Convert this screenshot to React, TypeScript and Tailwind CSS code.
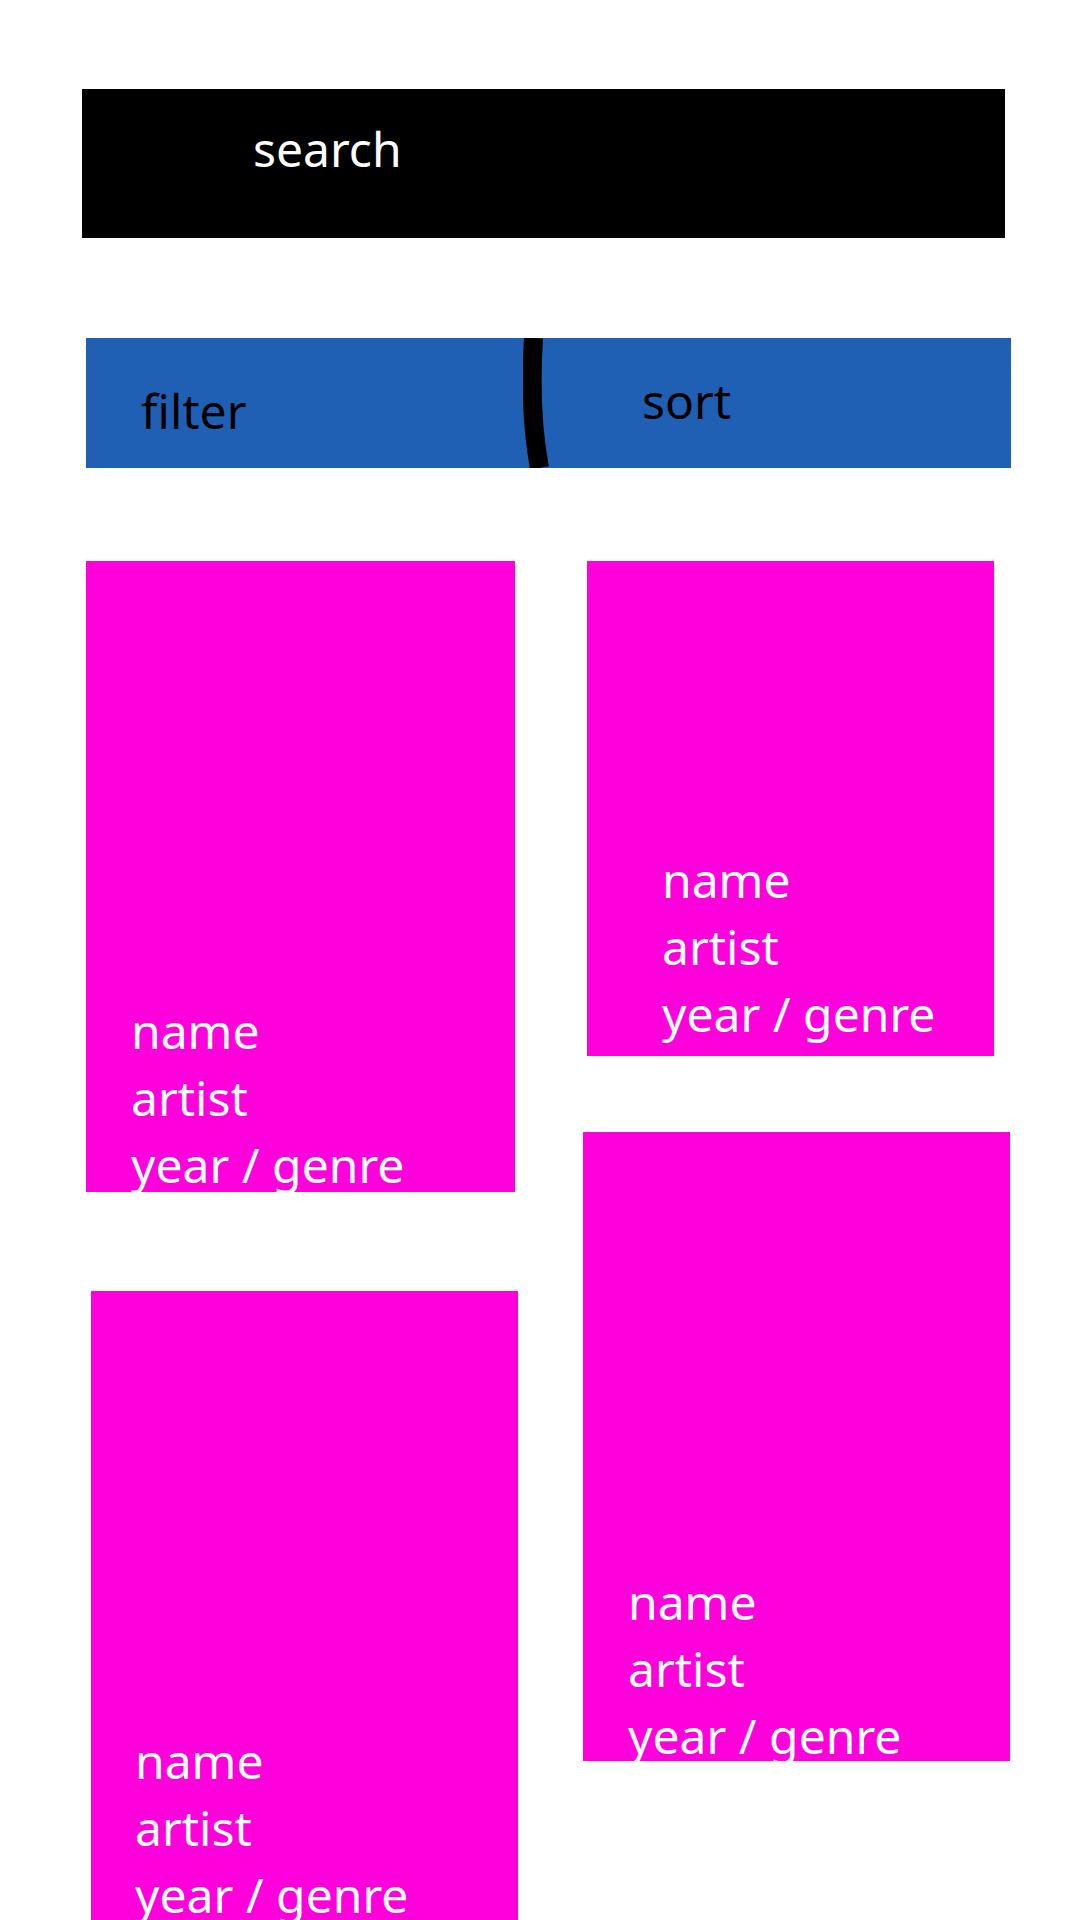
import React from 'react';

type Card = {
  box: string;
  pad: string;
};

function AlbumCard({ box, pad }: Card) {
  return (
    <div className={`bg-[#ff00dc] flex flex-col text-white text-[48px] leading-[67px] ${box} ${pad}`}>
      <span>name</span>
      <span>artist</span>
      <span className="whitespace-nowrap">year / genre</span>
    </div>
  );
}

export default function App() {
  return (
    <div
      className="w-[1080px] h-[1920px] overflow-hidden bg-white flex flex-col"
      style={{ fontFamily: '"Noto Sans", "Open Sans", sans-serif' }}
    >
      {/* search */}
      <div className="mt-[89px] ml-[82px] w-[923px] h-[149px] shrink-0 bg-black pt-[26px] pl-[171px]">
        <span className="text-white text-[48px] leading-[67px]">search</span>
      </div>

      {/* filter / sort */}
      <div className="mt-[100px] ml-[86px] w-[925px] h-[130px] shrink-0 bg-[#1f5fb4] flex">
        <div className="w-[437px] pt-[39px] pl-[55px] text-black text-[48px] leading-[67px]">filter</div>
        <svg width="26" height="130" viewBox="0 0 26 130" className="shrink-0">
          <path d="M10.5 0 C8 40 9 90 16.5 130" fill="none" stroke="#000" strokeWidth="19" />
        </svg>
        <div className="flex-1 pt-[29px] pl-[93px] text-black text-[48px] leading-[67px]">sort</div>
      </div>

      {/* cards */}
      <div className="mt-[93px] flex shrink-0">
        <div className="ml-[86px] w-[432px] flex flex-col shrink-0">
          <AlbumCard box="w-[429px] h-[631px]" pad="pt-[436px] pl-[45px]" />
          <AlbumCard box="mt-[99px] ml-[5px] w-[427px] h-[700px]" pad="pt-[436px] pl-[44px]" />
        </div>
        <div className="ml-[65px] flex flex-col shrink-0">
          <AlbumCard box="ml-[4px] w-[407px] h-[495px]" pad="pt-[285px] pl-[75px]" />
          <AlbumCard box="mt-[76px] w-[427px] h-[629px]" pad="pt-[436px] pl-[45px]" />
        </div>
      </div>
    </div>
  );
}
